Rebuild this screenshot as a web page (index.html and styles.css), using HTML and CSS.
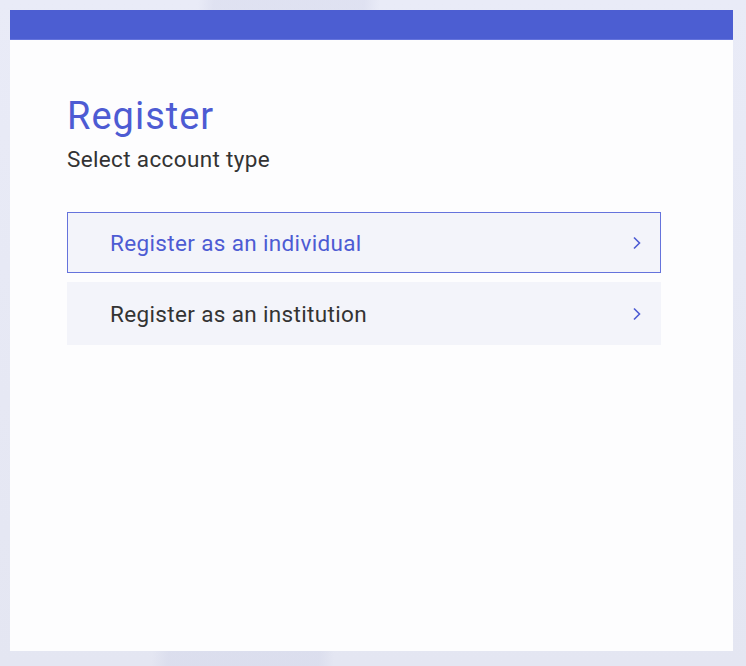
FILE: index.html
```html
<!DOCTYPE html>
<html lang="en">
<head>
<meta charset="utf-8">
<title>Register</title>
<link rel="stylesheet" href="styles.css">
</head>
<body>
<div class="page">
  <div class="card">
    <div class="card-bar"></div>
    <div class="card-body">
      <h1 class="title">Register</h1>
      <p class="subtitle">Select account type</p>
      <div class="options">
        <a class="option option-active" href="#">
          <span class="option-label">Register as an individual</span>
          <svg class="chevron" width="10" height="14" viewBox="0 0 10 14"><path d="M2 1.5 L7.5 7 L2 12.5" fill="none" stroke="#4d5bd3" stroke-width="1.6"/></svg>
        </a>
        <a class="option" href="#">
          <span class="option-label">Register as an institution</span>
          <svg class="chevron" width="10" height="14" viewBox="0 0 10 14"><path d="M2 1.5 L7.5 7 L2 12.5" fill="none" stroke="#4d5bd3" stroke-width="1.6"/></svg>
        </a>
      </div>
    </div>
  </div>
</div>
</body>
</html>
```
FILE: styles.css
```css
html, body {
  margin: 0;
  padding: 0;
}
body {
  font-family: Roboto, "Liberation Sans", sans-serif;
  background: #e8eaf6;
}
.page {
  width: 746px;
  height: 666px;
  box-sizing: border-box;
  padding: 10px 13px 15px 10px;
  background:
    linear-gradient(94deg, transparent 0 25%, rgba(200,204,228,0.3) 27% 46%, transparent 48% 100%),
    linear-gradient(180deg, #e9ebf7 0%, #e4e6f2 100%);
}
.card {
  height: 641px;
  background: #fdfdfe;
  display: flex;
  flex-direction: column;
}
.card-bar {
  height: 29px;
  background: #4c5ed2;
  border-bottom: 1px solid #6574dc;
}
.card-body {
  padding: 52px 72px 0 57px;
}
.title {
  margin: 0;
  font-size: 38px;
  font-weight: 400;
  line-height: 48px;
  letter-spacing: 1px;
  color: #4d5bd3;
}
.subtitle {
  margin: 5px 0 0;
  font-size: 22.5px;
  line-height: 28px;
  letter-spacing: 0.35px;
  color: #333;
}
.options {
  margin-top: 39px;
  display: flex;
  flex-direction: column;
  gap: 9px;
}
.option {
  display: flex;
  align-items: center;
  justify-content: space-between;
  height: 61px;
  box-sizing: border-box;
  padding: 0 18px 0 42px;
  background: #f3f4fa;
  border: 1px solid transparent;
  text-decoration: none;
  color: #333;
  font-size: 22.5px;
  letter-spacing: 0.35px;
}
.option-active {
  border-color: #6573dc;
  color: #4d5bd3;
}
.option + .option {
  height: 63px;
}
.chevron {
  display: block;
}
```
